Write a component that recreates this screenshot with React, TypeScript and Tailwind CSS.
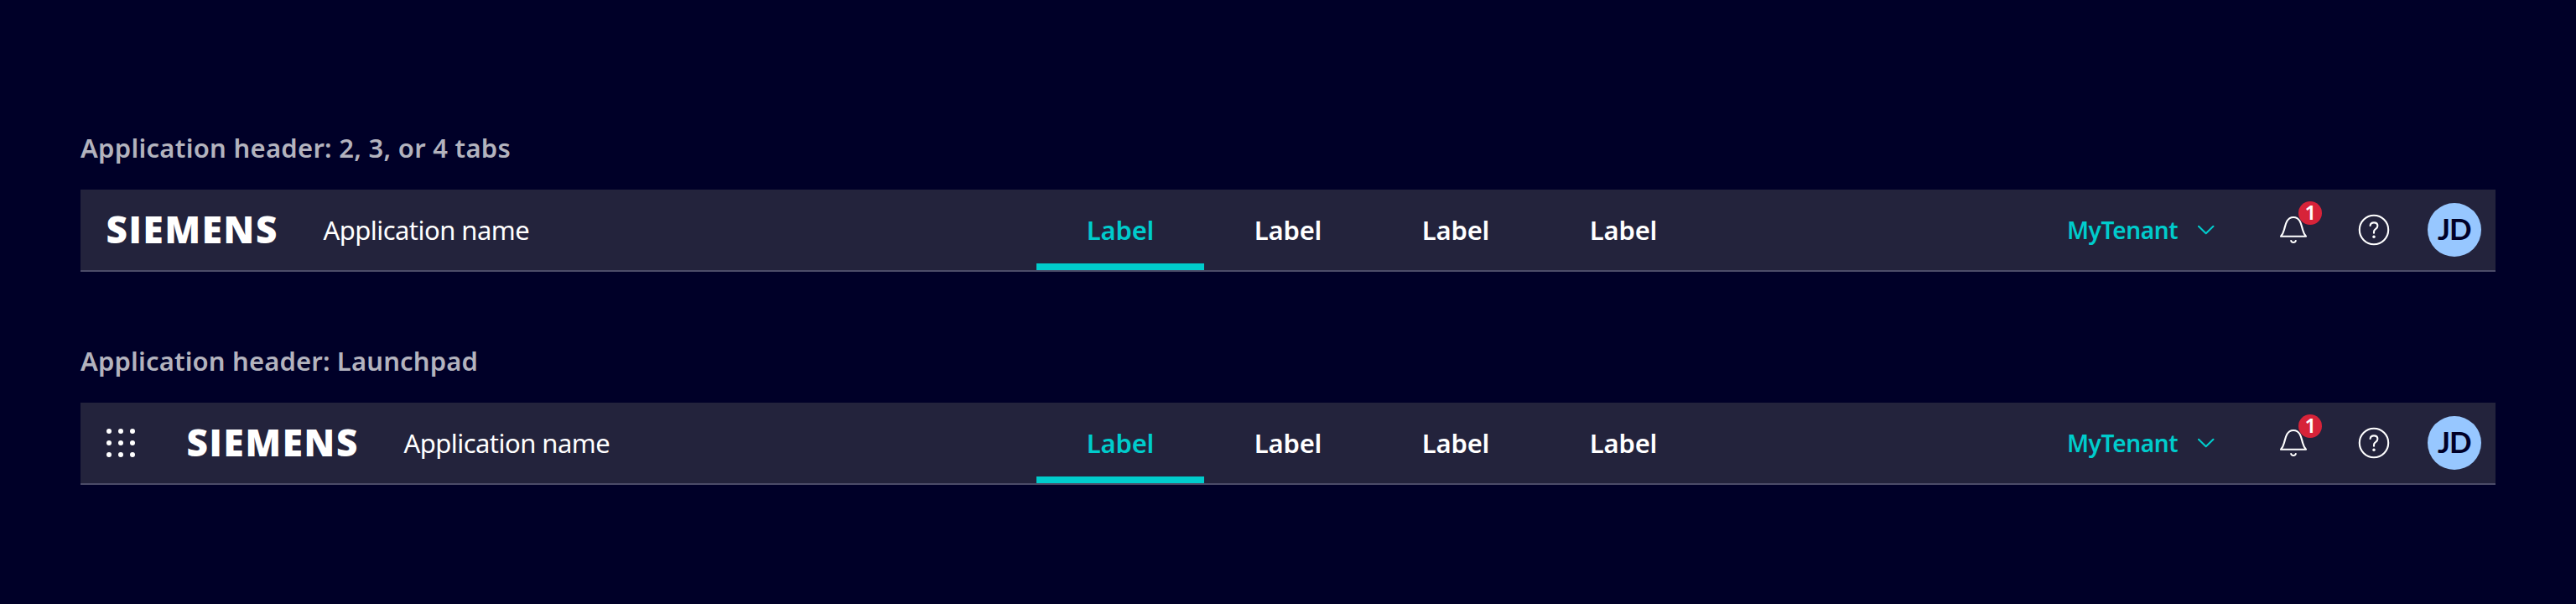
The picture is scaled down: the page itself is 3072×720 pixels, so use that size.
const tabs = ['Label', 'Label', 'Label', 'Label'];

function LaunchpadIcon() {
  return (
    <svg className="-ml-px mr-[63px] h-[34px] w-[34px] fill-white" viewBox="0 0 34 34">
      {[3, 17, 31].map((y) =>
        [3, 17, 31].map((x) => <circle key={`${x}-${y}`} cx={x} cy={y} r="3" />),
      )}
    </svg>
  );
}

function ChevronIcon() {
  return (
    <svg className="h-3 w-5" viewBox="0 0 20 12" fill="none" stroke="currentColor" strokeWidth="2.1">
      <path d="M1 1.8 L9.7 10.2 L18.4 1.8" strokeLinecap="round" strokeLinejoin="round" />
    </svg>
  );
}

function BellIcon() {
  return (
    <svg className="h-12 w-12" viewBox="0 0 48 48" fill="none" stroke="white" strokeWidth="2.1" strokeLinecap="round" strokeLinejoin="round">
      <path d="M9 31.8 H39 C37.2 30 36.2 27.8 35.1 24 C34.1 20.6 33.6 17.2 31.6 13.6 C29.8 10.4 27 9 24 9 C21 9 18.2 10.4 16.4 13.6 C14.4 17.2 13.9 20.6 12.9 24 C11.8 27.8 10.8 30 9 31.8 Z" />
      <path d="M21.2 37 C22 39.6 26 39.6 26.8 37" />
    </svg>
  );
}

function HelpIcon() {
  return (
    <svg className="h-12 w-12" viewBox="0 0 48 48" fill="none" stroke="white" strokeWidth="2.1" strokeLinecap="round" strokeLinejoin="round">
      <circle cx="24" cy="24" r="17.2" />
      <path d="M19.6 19 C19.8 16.6 21.5 15.4 24 15.4 C26.6 15.4 28.4 17 28.4 19.3 C28.4 21.2 27.2 22.2 25.9 23.1 C24.6 24 24 24.8 24 26.2 V27.8" />
      <circle cx="24" cy="32.3" r="1.7" fill="white" stroke="none" />
    </svg>
  );
}

function AppHeader({ launchpad = false }: { launchpad?: boolean }) {
  return (
    <header className="flex h-[98px] w-[2880px] items-stretch border-b-2 border-[#4c4c68] bg-[#23233c] text-white">
      <div className="flex w-[1140px] items-center pl-8">
        {launchpad && <LaunchpadIcon />}
        <span className="-ml-[1.5px] w-[259px] pb-[3px] font-['Open_Sans',sans-serif] text-[44px] leading-none font-extrabold tracking-[1.7px] whitespace-nowrap">
          SIEMENS
        </span>
        <span className="text-[31px] font-[380] tracking-[-0.55px] whitespace-nowrap">Application name</span>
      </div>
      <nav className="flex">
        {tabs.map((label, i) => (
          <a
            key={i}
            className={
              i === 0
                ? 'flex w-[200px] items-center justify-center border-b-8 border-[#00cccc] pt-2 text-[31px] font-[560] tracking-[-0.2px] text-[#00cccc]'
                : 'flex w-[200px] items-center justify-center text-[31px] font-[560] tracking-[-0.2px]'
            }
          >
            {label}
          </a>
        ))}
      </nav>
      <div className="ml-auto flex items-center pr-[16.7px]">
        <button className="mr-[70px] flex items-center gap-6 text-[#00cccc]">
          <span className="text-[28px] font-[560] tracking-[-0.35px]">MyTenant</span>
          <ChevronIcon />
        </button>
        <div className="relative mr-12">
          <BellIcon />
          <span className="absolute top-[-10px] left-[30px] flex h-7 w-7 items-center justify-center rounded-full bg-[#d72339] pb-[2px] text-[24px] leading-none font-semibold">
            1
          </span>
        </div>
        <div className="mr-10">
          <HelpIcon />
        </div>
        <span className="flex h-16 w-16 items-center justify-center rounded-full bg-[#97c7ff] pr-px pb-[3px] font-['Lato',sans-serif] text-[35px] leading-none font-bold tracking-[-1px] text-[#000028]">
          JD
        </span>
      </div>
    </header>
  );
}

function Example({ title, launchpad }: { title: string; launchpad?: boolean }) {
  return (
    <section className="flex flex-col gap-[30px]">
      <h2
        className={
          launchpad
            ? 'text-[31px] leading-10 font-[560] tracking-[0.15px] text-[#b3b3be]'
            : 'text-[31px] leading-10 font-[560] tracking-[0.27px] text-[#b3b3be]'
        }
      >
        {title}
      </h2>
      <AppHeader launchpad={launchpad} />
    </section>
  );
}

export default function App() {
  return (
    <main className="flex h-[720px] flex-col gap-[86px] bg-[#000028] px-24 pt-[156px] font-['Noto_Sans',sans-serif]">
      <Example title="Application header: 2, 3, or 4 tabs" />
      <Example title="Application header: Launchpad" launchpad />
    </main>
  );
}
